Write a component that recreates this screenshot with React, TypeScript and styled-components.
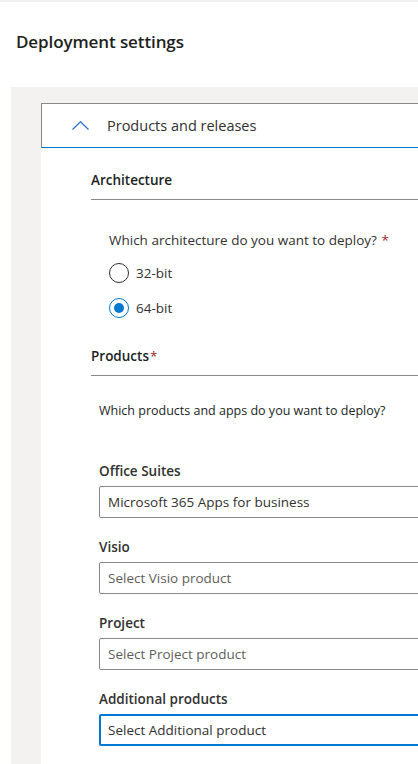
import React from "react";
import styled, { createGlobalStyle } from "styled-components";

const GlobalStyle = createGlobalStyle`
  html, body {
    margin: 0;
    padding: 0;
    background: #ffffff;
    overflow: hidden;
  }
  body {
    font-family: "Open Sans", "Noto Sans", sans-serif;
    color: #323130;
  }
`;

// Styles
const Page = styled.div`
  width: 418px;
  height: 764px;
  overflow: hidden;
  display: flex;
  flex-direction: column;
  border-top: 2px solid #f3f2f1;
  box-sizing: border-box;
`;

const PanelHeader = styled.div`
  height: 85px;
  box-sizing: border-box;
  flex-shrink: 0;
  display: flex;
  align-items: center;
  padding: 0 0 6px 16px;
`;

const Title = styled.h1`
  margin: 0;
  font-size: 17px;
  font-weight: 600;
  color: #201f1e;
  letter-spacing: -0.1px;
`;

const Canvas = styled.div`
  flex: 1;
  margin-left: 11px;
  background: #f3f2f1;
  padding: 16px 0 0 30px;
  overflow: hidden;
`;

const Card = styled.div`
  width: 620px;
  background: #ffffff;
  min-height: 100%;
`;

const AccordionHeader = styled.div`
  height: 43px;
  display: flex;
  align-items: center;
  border: 1px solid #8a8886;
  border-bottom: 1px solid #0078d4;
  padding-left: 30px;
  gap: 18px;
`;

const AccordionTitle = styled.span`
  font-size: 14.5px;
  color: #323130;
`;

const Content = styled.div`
  padding: 23px 0 0 50px;
  display: flex;
  flex-direction: column;
`;

const SectionTitle = styled.div`
  font-size: 13.5px;
  font-weight: 600;
  color: #201f1e;
  padding-bottom: 10px;
  border-bottom: 1px solid #8a8886;
`;

const Required = styled.span`
  color: #a4262c;
  font-weight: 400;
  margin-left: 1px;
`;

const Group = styled.div<{ $top: number; $indent: number }>`
  margin-top: ${(p) => p.$top}px;
  padding-left: ${(p) => p.$indent}px;
  display: flex;
  flex-direction: column;
`;

const Question = styled.div`
  font-size: 13.5px;
  color: #323130;
  margin-bottom: 6px;
`;

const Hint = styled.div`
  font-size: 12.5px;
  color: #201f1e;
`;

const RadioRow = styled.label`
  display: flex;
  align-items: center;
  gap: 7px;
  height: 35px;
  font-size: 13.5px;
  color: #323130;
`;

const RadioCircle = styled.span<{ $checked?: boolean }>`
  width: 20px;
  height: 20px;
  box-sizing: border-box;
  border-radius: 50%;
  border: 1px solid ${(p) => (p.$checked ? "#0078d4" : "#323130")};
  display: flex;
  align-items: center;
  justify-content: center;
  &::after {
    content: "";
    width: 10px;
    height: 10px;
    border-radius: 50%;
    background: ${(p) => (p.$checked ? "#0078d4" : "transparent")};
  }
`;

const Field = styled.div`
  display: flex;
  flex-direction: column;
  margin-bottom: 20px;
`;

const FieldLabel = styled.div`
  font-size: 13.5px;
  font-weight: 600;
  color: #323130;
  height: 18px;
  line-height: 18px;
  margin-bottom: 6px;
`;

const Input = styled.div<{ $focused?: boolean; $placeholder?: boolean }>`
  height: 32px;
  box-sizing: border-box;
  border-radius: 2px;
  border: ${(p) => (p.$focused ? "2px solid #0078d4" : "1px solid #8a8886")};
  padding-left: ${(p) => (p.$focused ? 7 : 8)}px;
  display: flex;
  align-items: center;
  font-size: 13.5px;
  color: ${(p) => (p.$placeholder && !p.$focused ? "#605e5c" : "#323130")};
`;

const Chevron = () => (
  <svg width="17" height="9" viewBox="0 0 17 9" fill="none">
    <path d="M0.5 8.5 L8.5 0.7 L16.5 8.5" stroke="#2b6fd6" strokeWidth="1.2" />
  </svg>
);

const fields = [
  { label: "Office Suites", value: "Microsoft 365 Apps for business", placeholder: false },
  { label: "Visio", value: "Select Visio product", placeholder: true },
  { label: "Project", value: "Select Project product", placeholder: true },
  { label: "Additional products", value: "Select Additional product", placeholder: true, focused: true },
];

const App: React.FC = () => {
  return (
    <>
      <GlobalStyle />
      <Page>
        <PanelHeader>
          <Title>Deployment settings</Title>
        </PanelHeader>
        <Canvas>
          <Card>
            <AccordionHeader>
              <Chevron />
              <AccordionTitle>Products and releases</AccordionTitle>
            </AccordionHeader>
            <Content>
              <SectionTitle>Architecture</SectionTitle>
              <Group $top={31} $indent={18}>
                <Question>
                  Which architecture do you want to deploy? <Required>*</Required>
                </Question>
                <RadioRow>
                  <RadioCircle />
                  32-bit
                </RadioRow>
                <RadioRow>
                  <RadioCircle $checked />
                  64-bit
                </RadioRow>
              </Group>
              <Group $top={22} $indent={0}>
                <SectionTitle>
                  Products<Required>*</Required>
                </SectionTitle>
              </Group>
              <Group $top={26} $indent={8}>
                <Hint>Which products and apps do you want to deploy?</Hint>
              </Group>
              <Group $top={43} $indent={8}>
                {fields.map((f) => (
                  <Field key={f.label}>
                    <FieldLabel>{f.label}</FieldLabel>
                    <Input $placeholder={f.placeholder} $focused={f.focused}>
                      {f.value}
                    </Input>
                  </Field>
                ))}
              </Group>
            </Content>
          </Card>
        </Canvas>
      </Page>
    </>
  );
};

export default App;
